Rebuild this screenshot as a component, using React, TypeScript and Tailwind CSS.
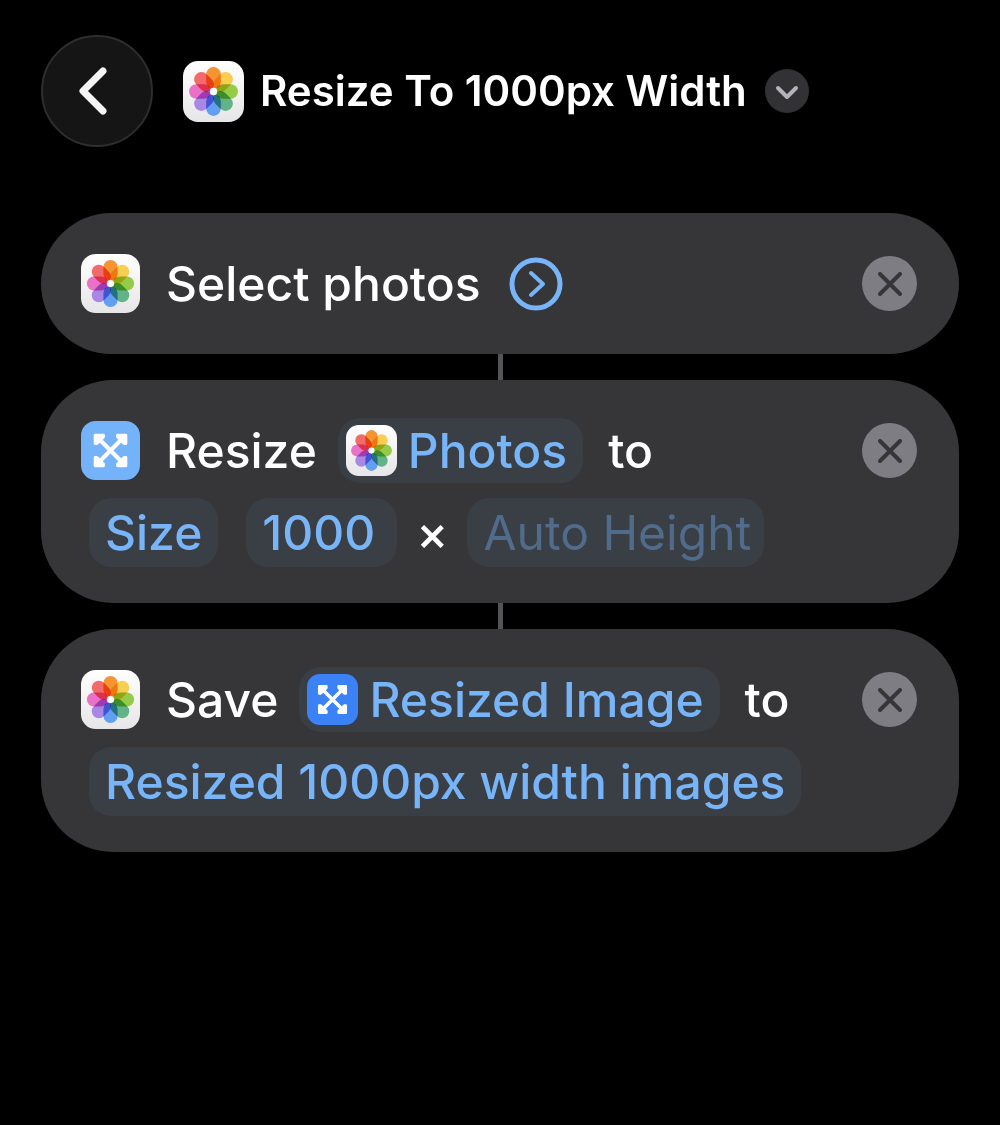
import type { ReactNode } from "react";

const PETALS = [
  { angle: 0, color: "#f49432" },
  { angle: 45, color: "#f9cd50" },
  { angle: 90, color: "#96cb48" },
  { angle: 135, color: "#62b488" },
  { angle: 180, color: "#629ef2" },
  { angle: 225, color: "#a987e4" },
  { angle: 270, color: "#ea70c8" },
  { angle: 315, color: "#f26a69" },
];

/** Photos app icon: eight overlapping petals on a white tile */
const PhotosIcon = ({ className }: { className: string }) => (
  <svg viewBox="0 0 100 100" className={`shrink-0 ${className}`} aria-hidden="true">
    <defs>
      <linearGradient id="photos-tile" x1="0" y1="0" x2="0" y2="1">
        <stop offset="0" stopColor="#ffffff" />
        <stop offset="1" stopColor="#e6e6e8" />
      </linearGradient>
    </defs>
    <rect width="100" height="100" rx="25" fill="url(#photos-tile)" />
    <g className="isolate">
      {PETALS.map(({ angle, color }) => (
        <rect
          key={angle}
          x="38"
          y="10"
          width="24"
          height="36"
          rx="12"
          fill={color}
          transform={`rotate(${angle} 50 50)`}
          className="mix-blend-multiply"
        />
      ))}
    </g>
    <circle cx="50" cy="50" r="6" fill="#ffffff" />
  </svg>
);

/** Resize action icon: four arrows pointing to the corners */
const ResizeIcon = ({ className, color }: { className: string; color: string }) => (
  <svg viewBox="0 0 100 100" className={`shrink-0 ${className}`} aria-hidden="true">
    <rect width="100" height="100" rx="25" fill={color} />
    <g stroke="#ffffff" strokeWidth="5" strokeLinecap="round" strokeLinejoin="round" fill="#ffffff">
      <path d="M31 31 69 69M69 31 31 69" strokeWidth="7" />
      <path d="M24 24h14v3L27 38h-3zM76 24v14h-3L62 27v-3zM76 76H62v-3l11-11h3zM24 76V62h3l11 11v3z" />
    </g>
  </svg>
);

const CloseButton = ({ label }: { label: string }) => (
  <button
    aria-label={label}
    className="ml-auto flex size-[55px] shrink-0 items-center justify-center rounded-full bg-[#7e7d84]"
  >
    <svg viewBox="0 0 24 24" className="size-6" fill="none" stroke="#363638" strokeWidth="4" strokeLinecap="round">
      <path d="M2 2 22 22M22 2 2 22" />
    </svg>
  </button>
);

/** Tappable variable inside an action, with an optional icon */
const Token = ({ icon, children }: { icon?: ReactNode; children: ReactNode }) => (
  <button
    className={`flex items-center whitespace-nowrap bg-[#3a3e45] text-[#78b4f8] ${
      icon ? "h-[65px] gap-[11px] rounded-[22px] pl-2 pr-4" : "h-[69px] rounded-[22px] px-4"
    }`}
  >
    {icon}
    {children}
  </button>
);

interface ActionProps {
  name: string;
  icon: ReactNode;
  title: ReactNode;
  children?: ReactNode;
}

const Action = ({ name, icon, title, children }: ActionProps) => (
  <section
    aria-label={name}
    className="flex w-full flex-col gap-[13px] rounded-[72px] bg-[#363638] py-9 pl-10 pr-[42px]"
  >
    <div className="flex h-[69px] items-center">
      {icon}
      <div className="ml-[26px] flex items-center whitespace-nowrap">{title}</div>
      <CloseButton label={`Remove ${name}`} />
    </div>
    {children && <div className="flex items-center pl-2">{children}</div>}
  </section>
);

const Connector = () => <div className="h-[26px] w-[5px] bg-[#545456]" />;

const App = () => {
  return (
    <div className="min-h-screen w-full bg-black px-[41px] py-[35px] font-['Inter',sans-serif] text-white">
      {/* Header with back button and shortcut name */}
      <header className="flex items-center">
        <button
          aria-label="Back"
          className="flex size-[112px] shrink-0 items-center justify-center rounded-full border-2 border-[#2e2e2e] bg-[#151515]"
        >
          <svg viewBox="0 0 28 48" className="mr-2 h-12 w-7" fill="none" stroke="#f5f5f5" strokeWidth="7" strokeLinecap="round" strokeLinejoin="round">
            <path d="M24 4 4 24 24 44" />
          </svg>
        </button>
        <PhotosIcon className="ml-[30px] size-[61px]" />
        <h1 className="ml-4 whitespace-nowrap text-[42px] font-semibold leading-[52px]">
          Resize To 1000px Width
        </h1>
        <button
          aria-label="Shortcut options"
          className="ml-[18px] flex size-11 shrink-0 items-center justify-center rounded-full bg-[#323234]"
        >
          <svg viewBox="0 0 24 16" className="mt-1 h-4 w-6" fill="none" stroke="#b4b3ba" strokeWidth="4" strokeLinecap="round" strokeLinejoin="round">
            <path d="M3 3 12 12 21 3" />
          </svg>
        </button>
      </header>

      {/* Action list */}
      <main className="mt-[66px] flex flex-col items-center text-[48px] font-medium leading-[60px]">
        <Action
          name="Select photos"
          icon={<PhotosIcon className="size-[59px]" />}
          title={
            <>
              <span>Select photos</span>
              <button aria-label="Show more" className="ml-7">
                <svg viewBox="0 0 54 54" className="size-[54px]" fill="none" stroke="#78b4f8" strokeWidth="4" strokeLinecap="round" strokeLinejoin="round">
                  <circle cx="27" cy="27" r="24" strokeWidth="5" />
                  <path d="M22 16 34 27 22 38" />
                </svg>
              </button>
            </>
          }
        />
        <Connector />
        <Action
          name="Resize photos"
          icon={<ResizeIcon className="size-[59px]" color="#74b3fa" />}
          title={
            <>
              <span className="mr-[21px]">Resize</span>
              <Token icon={<PhotosIcon className="size-[51px]" />}>Photos</Token>
              <span className="ml-[25px]">to</span>
            </>
          }
        >
          <Token>Size</Token>
          <input
            aria-label="Width"
            defaultValue="1000"
            className="ml-7 h-[69px] w-[151px] rounded-[22px] bg-[#3a3e45] pl-4 pr-3 text-[#78b4f8]"
          />
          <span className="mx-[19px]">×</span>
          <input
            aria-label="Height"
            placeholder="Auto Height"
            className="h-[69px] w-[297px] rounded-[22px] bg-[#3a3e45] pl-4 pr-3 font-normal placeholder:text-[#516b8b]"
          />
        </Action>
        <Connector />
        <Action
          name="Save resized image"
          icon={<PhotosIcon className="size-[59px]" />}
          title={
            <>
              <span className="mr-[21px]">Save</span>
              <Token icon={<ResizeIcon className="size-[51px]" color="#3b82f6" />}>Resized Image</Token>
              <span className="ml-[25px]">to</span>
            </>
          }
        >
          <Token>Resized 1000px width images</Token>
        </Action>
      </main>
    </div>
  );
};

export default App;
